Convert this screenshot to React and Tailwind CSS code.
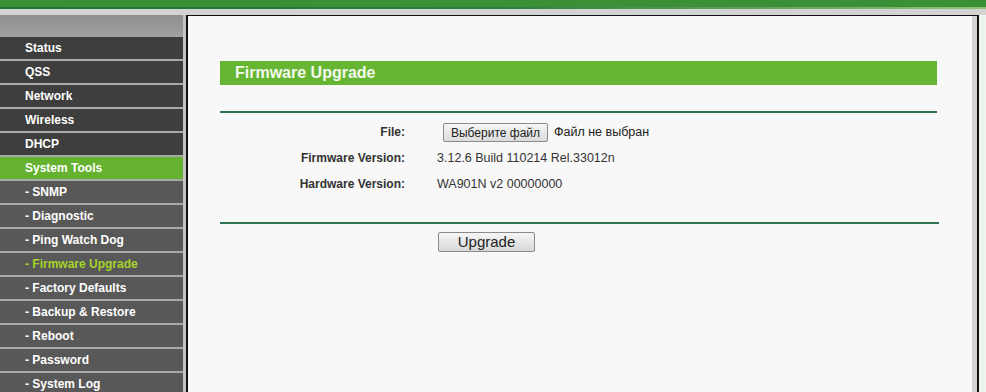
import React from "react";

const menu = [
  { name: "Status", level: 0 },
  { name: "QSS", level: 0 },
  { name: "Network", level: 0 },
  { name: "Wireless", level: 0 },
  { name: "DHCP", level: 0 },
  { name: "System Tools", level: 0, open: true },
  { name: "- SNMP", level: 1 },
  { name: "- Diagnostic", level: 1 },
  { name: "- Ping Watch Dog", level: 1 },
  { name: "- Firmware Upgrade", level: 1, active: true },
  { name: "- Factory Defaults", level: 1 },
  { name: "- Backup & Restore", level: 1 },
  { name: "- Reboot", level: 1 },
  { name: "- Password", level: 1 },
  { name: "- System Log", level: 1 },
];

const font = { fontFamily: '"Liberation Sans", Arial, sans-serif' };

function MenuItem({ item }) {
  let bg = item.level === 0 ? "bg-[#3e3e3e]" : "bg-[#585858]";
  if (item.open) bg = "bg-[#64b22f]";
  const color = item.active ? "text-[#a6d32a]" : "text-white";
  return (
    <div className={`flex h-[22px] items-center pl-[25px] ${bg} border-b-2 border-[#a9a9a9] box-content`}>
      <span className={`text-[12px] font-bold ${color}`}>{item.name}</span>
    </div>
  );
}

function Row({ label, children }) {
  return (
    <div className="flex h-[26px] items-center">
      <div className="w-[185px] text-right text-[12px] font-bold text-[#333]">{label}</div>
      <div className="flex items-center pl-[32px] text-[12.5px] text-[#333]">{children}</div>
    </div>
  );
}

export default function App() {
  return (
    <div className="h-[392px] w-[986px] overflow-hidden bg-[#d4d4d4]" style={font}>
      {/* header band */}
      <div className="h-[7px] bg-[#3b9036]" />
      <div className="h-[2px] bg-gradient-to-r from-[#23713a] via-[#2b7d3a] to-[#8fc37c]" />
      <div className="h-[6px] bg-[#d3d3d3]" />

      <div className="flex">
        {/* sidebar */}
        <div className="w-[183px] shrink-0">
          <div className="h-[22px] bg-gradient-to-b from-[#8f8f8f] to-[#a1a1a1]" />
          {menu.map((item) => (
            <MenuItem key={item.name} item={item} />
          ))}
        </div>
        <div className="w-[3px] shrink-0 bg-[#c3c3c3]" />

        {/* frame */}
        <div className="flex h-[400px] w-[793px] shrink-0 border-l-2 border-t border-r-2 border-[#111]">
          <div className="w-[784px] shrink-0 bg-[#f8f8f8] pl-[32px] pt-[45px]">
            <div className="flex h-[24px] w-[717px] items-center bg-[#66b633] pl-[15px]">
              <span className="text-[16px] font-bold text-[#f4f9ee]">Firmware Upgrade</span>
            </div>

            <div className="mt-[26px] h-[2px] w-[717px] bg-[#2f7650]" />

            <div className="pt-[6px]">
              <Row label="File:">
                <button className="ml-[6px] h-[19px] w-[105px] rounded-[2px] border border-[#8a8a8a] bg-gradient-to-b from-[#f6f6f6] to-[#dcdcdc] text-[12px] text-[#222]">
                  Выберите файл
                </button>
                <span className="ml-[6px] text-[12.5px] text-[#222]">Файл не выбран</span>
              </Row>
              <Row label="Firmware Version:">3.12.6 Build 110214 Rel.33012n</Row>
              <Row label="Hardware Version:">WA901N v2 00000000</Row>
            </div>

            <div className="mt-[25px] h-[2px] w-[719px] bg-[#2f7650]" />

            <div className="mt-[6px] pl-[218px]">
              <button className="h-[20px] w-[97px] rounded-[2px] border border-[#8a8a8a] bg-gradient-to-b from-[#f6f6f6] to-[#d8d8d8] text-[15px] leading-none text-[#222]">
                Upgrade
              </button>
            </div>
          </div>
          <div className="w-[5px] shrink-0 bg-[#d2d2d2]" />
        </div>
        <div className="flex-1 bg-[#eef4ee]" />
      </div>
    </div>
  );
}
